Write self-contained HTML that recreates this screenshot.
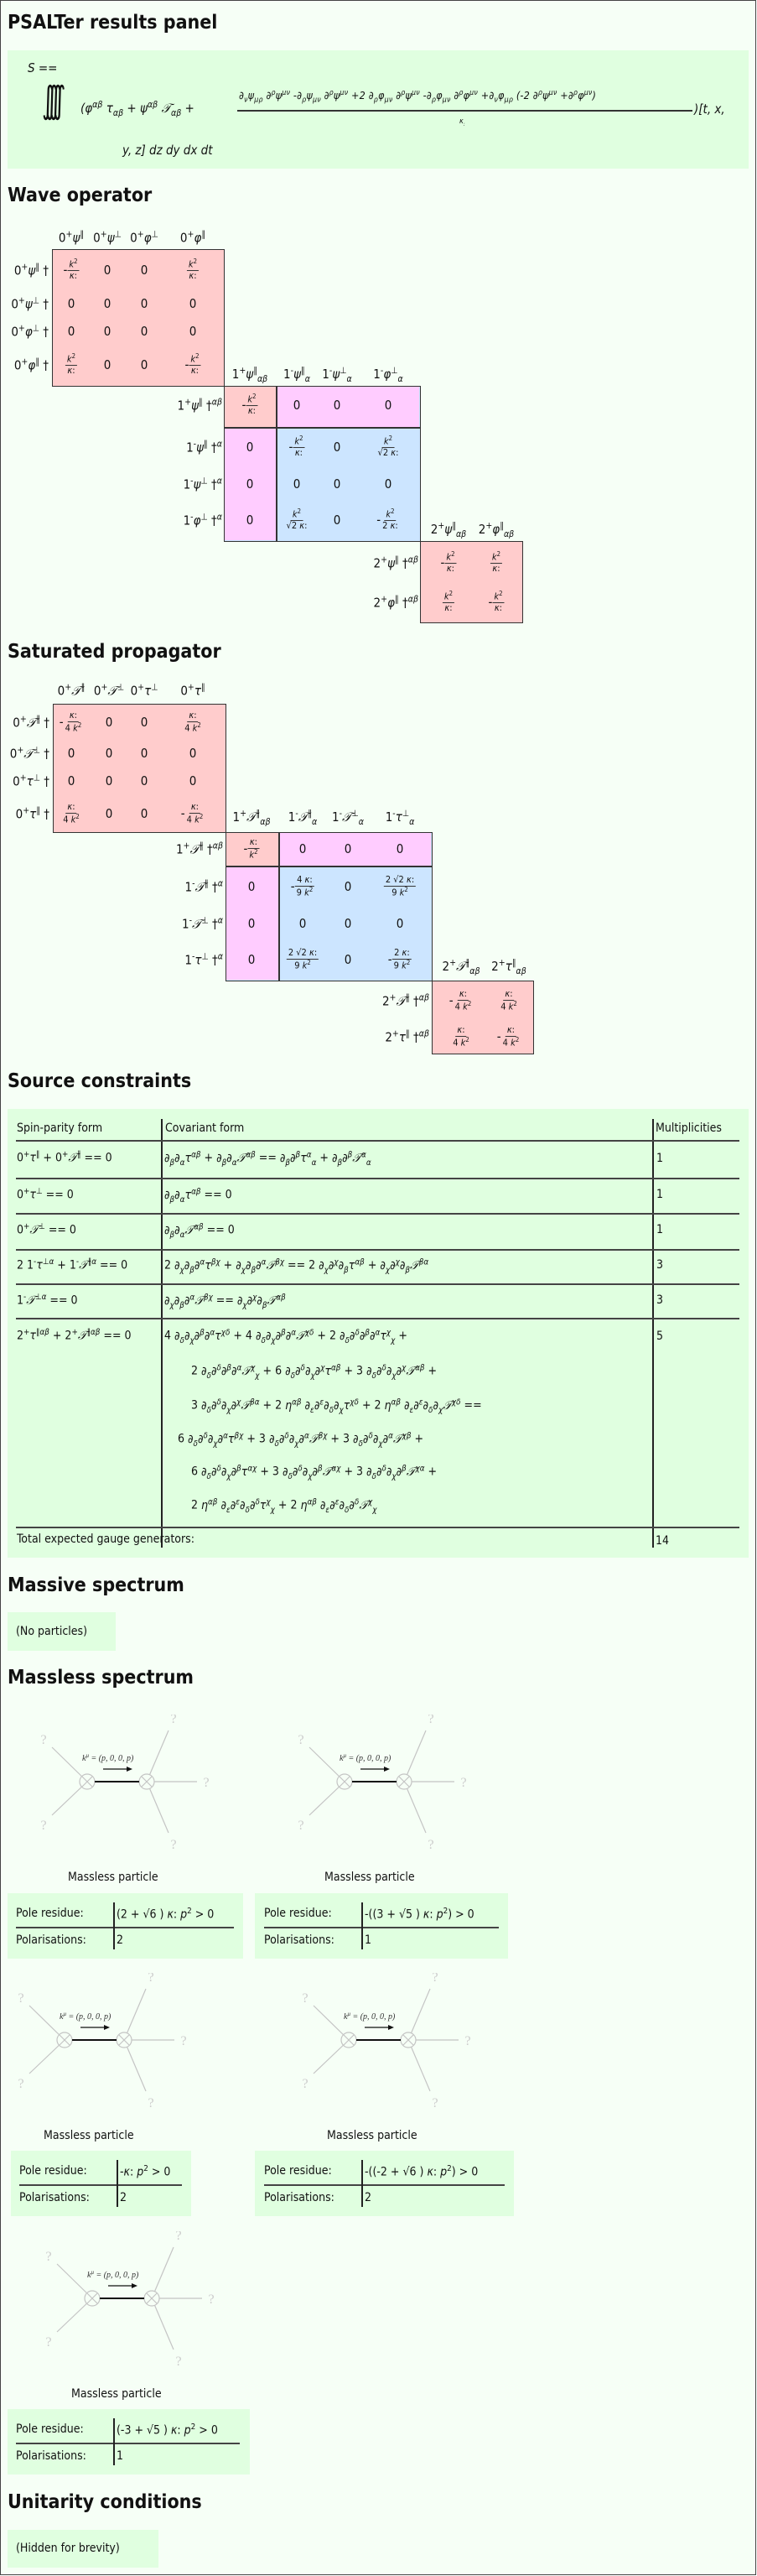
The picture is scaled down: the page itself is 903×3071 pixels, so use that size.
<!DOCTYPE html>
<html><head><meta charset="utf-8"><style>
*{margin:0;padding:0;box-sizing:border-box}
body{width:903px;height:3071px;background:#fff;font-family:"DejaVu Sans Condensed","DejaVu Sans","Liberation Sans",sans-serif;font-size:14px;color:#111;position:relative;overflow:hidden}
#frame{position:absolute;left:0;top:0;width:902px;height:3070px;border:1.5px solid #444;background:#f6fff6}
.a{position:absolute;white-space:nowrap}
h2{position:absolute;left:9px;font-size:23px;font-weight:bold;white-space:nowrap;line-height:1}
.pan{position:absolute;background:#e0ffe0}
.c{position:absolute;transform:translate(-50%,-50%);white-space:nowrap;font-size:15px}
.r{position:absolute;transform:translate(-100%,-50%);white-space:nowrap;font-size:15px}
.h{position:absolute;transform:translate(-50%,-50%);white-space:nowrap;font-size:15px}
.fr{display:inline-flex;flex-direction:column;align-items:center;vertical-align:middle;font-size:11px;line-height:1.15}
.fr .n{border-bottom:1.5px solid #333;padding:0 2px}
.fr .d{padding:0 2px}
i{font-style:italic}
sup,sub{font-size:70%}
.box{position:absolute;border:1.5px solid #333}
.s{background:#ffcccc}.p{background:#ffccff}.b{background:#cce5ff}
.hl{position:absolute;height:2px;background:#444}
.vl{position:absolute;width:1.5px;background:#222}
.m{font-size:14px}
</style></head><body>
<div id="frame"></div>

<h2 style="top:16px">PSALTer results panel</h2>
<div class="pan" style="left:9px;top:60px;width:884px;height:141px"></div>
<div class="a" style="left:33px;top:72px;font-size:15px"><i>S</i> ==</div>
<div class="a" style="left:50px;top:98px;font-size:44px;line-height:1;font-style:italic;letter-spacing:-14px;transform:scaleX(0.7);transform-origin:left">∫∫∫∫</div>
<div class="a" style="left:96px;top:119px;font-size:15px"><i>(φ<sup>αβ</sup> τ<sub>αβ</sub></i> + <i>ψ<sup>αβ</sup> 𝒯<sub>αβ</sub></i> +</div>
<div class="a" style="left:285px;top:106px;font-size:12.5px;font-style:italic;letter-spacing:0.2px">∂<sub>ν</sub>ψ<sub>μρ</sub> ∂<sup>ρ</sup>ψ<sup>μν</sup> -∂<sub>ρ</sub>ψ<sub>μν</sub> ∂<sup>ρ</sup>ψ<sup>μν</sup> +2 ∂<sub>ρ</sub>φ<sub>μν</sub> ∂<sup>ρ</sup>ψ<sup>μν</sup> -∂<sub>ρ</sub>φ<sub>μν</sub> ∂<sup>ρ</sup>φ<sup>μν</sup> +∂<sub>ν</sub>φ<sub>μρ</sub> (-2 ∂<sup>ρ</sup>ψ<sup>μν</sup> +∂<sup>ρ</sup>φ<sup>μν</sup>)</div>
<div class="a" style="left:283px;top:131px;width:543px;height:1.5px;background:#333"></div>
<div class="a" style="left:548px;top:140px;font-size:9px;font-style:italic">κ<sub>:</sub></div>
<div class="a" style="left:828px;top:121px;font-size:15px;font-style:italic">)[t, x,</div>
<div class="a" style="left:146px;top:170px;font-size:15px;font-style:italic">y, z] dz dy dx dt</div>

<h2 style="top:222px">Wave operator</h2>
<!-- block1 -->
<div class="box s" style="left:62px;top:297px;width:206px;height:164px"></div>
<div class="h" style="left:85px;top:283px">0<sup>+</sup><i>ψ</i><sup>∥</sup></div>
<div class="h" style="left:128px;top:283px">0<sup>+</sup><i>ψ</i><sup>⊥</sup></div>
<div class="h" style="left:172px;top:283px">0<sup>+</sup><i>φ</i><sup>⊥</sup></div>
<div class="h" style="left:230px;top:283px">0<sup>+</sup><i>φ</i><sup>∥</sup></div>
<div class="r" style="left:58px;top:322px">0<sup>+</sup><i>ψ</i><sup>∥</sup> †</div>
<div class="r" style="left:58px;top:362px">0<sup>+</sup><i>ψ</i><sup>⊥</sup> †</div>
<div class="r" style="left:58px;top:395px">0<sup>+</sup><i>φ</i><sup>⊥</sup> †</div>
<div class="r" style="left:58px;top:435px">0<sup>+</sup><i>φ</i><sup>∥</sup> †</div>
<div class="c" style="left:85px;top:322px">-<span class="fr"><span class="n"><i>k</i><sup>2</sup></span><span class="d"><i>κ</i>:</span></span></div>
<div class="c" style="left:128px;top:322px">0</div><div class="c" style="left:172px;top:322px">0</div>
<div class="c" style="left:230px;top:322px"><span class="fr"><span class="n"><i>k</i><sup>2</sup></span><span class="d"><i>κ</i>:</span></span></div>
<div class="c" style="left:85px;top:362px">0</div><div class="c" style="left:128px;top:362px">0</div><div class="c" style="left:172px;top:362px">0</div><div class="c" style="left:230px;top:362px">0</div>
<div class="c" style="left:85px;top:395px">0</div><div class="c" style="left:128px;top:395px">0</div><div class="c" style="left:172px;top:395px">0</div><div class="c" style="left:230px;top:395px">0</div>
<div class="c" style="left:85px;top:435px"><span class="fr"><span class="n"><i>k</i><sup>2</sup></span><span class="d"><i>κ</i>:</span></span></div>
<div class="c" style="left:128px;top:435px">0</div><div class="c" style="left:172px;top:435px">0</div>
<div class="c" style="left:230px;top:435px">-<span class="fr"><span class="n"><i>k</i><sup>2</sup></span><span class="d"><i>κ</i>:</span></span></div>

<!-- block2 -->
<div class="box" style="left:267px;top:460px;width:235px;height:186px;background:#cce5ff"></div>
<div class="a s" style="left:268px;top:461px;width:61px;height:48px"></div>
<div class="a p" style="left:330px;top:461px;width:170px;height:48px"></div>
<div class="a p" style="left:268px;top:510px;width:61px;height:134px"></div>
<div class="a" style="left:329px;top:461px;width:1.5px;height:184px;background:#333"></div>
<div class="a" style="left:268px;top:509px;width:233px;height:1.5px;background:#333"></div>
<div class="h" style="left:298px;top:447px">1<sup>+</sup><i>ψ</i><sup>∥</sup><sub><i>αβ</i></sub></div>
<div class="h" style="left:354px;top:447px">1<sup>-</sup><i>ψ</i><sup>∥</sup><sub><i>α</i></sub></div>
<div class="h" style="left:402px;top:447px">1<sup>-</sup><i>ψ</i><sup>⊥</sup><sub><i>α</i></sub></div>
<div class="h" style="left:463px;top:447px">1<sup>-</sup><i>φ</i><sup>⊥</sup><sub><i>α</i></sub></div>
<div class="r" style="left:265px;top:483px">1<sup>+</sup><i>ψ</i><sup>∥</sup> †<sup><i>αβ</i></sup></div>
<div class="r" style="left:265px;top:533px">1<sup>-</sup><i>ψ</i><sup>∥</sup> †<sup><i>α</i></sup></div>
<div class="r" style="left:265px;top:577px">1<sup>-</sup><i>ψ</i><sup>⊥</sup> †<sup><i>α</i></sup></div>
<div class="r" style="left:265px;top:620px">1<sup>-</sup><i>φ</i><sup>⊥</sup> †<sup><i>α</i></sup></div>
<div class="c" style="left:298px;top:483px">-<span class="fr"><span class="n"><i>k</i><sup>2</sup></span><span class="d"><i>κ</i>:</span></span></div>
<div class="c" style="left:354px;top:483px">0</div><div class="c" style="left:402px;top:483px">0</div><div class="c" style="left:463px;top:483px">0</div>
<div class="c" style="left:298px;top:533px">0</div>
<div class="c" style="left:354px;top:533px">-<span class="fr"><span class="n"><i>k</i><sup>2</sup></span><span class="d"><i>κ</i>:</span></span></div>
<div class="c" style="left:402px;top:533px">0</div>
<div class="c" style="left:463px;top:533px"><span class="fr"><span class="n"><i>k</i><sup>2</sup></span><span class="d">√2 <i>κ</i>:</span></span></div>
<div class="c" style="left:298px;top:577px">0</div><div class="c" style="left:354px;top:577px">0</div><div class="c" style="left:402px;top:577px">0</div><div class="c" style="left:463px;top:577px">0</div>
<div class="c" style="left:298px;top:620px">0</div>
<div class="c" style="left:354px;top:620px"><span class="fr"><span class="n"><i>k</i><sup>2</sup></span><span class="d">√2 <i>κ</i>:</span></span></div>
<div class="c" style="left:402px;top:620px">0</div>
<div class="c" style="left:463px;top:620px">-<span class="fr"><span class="n"><i>k</i><sup>2</sup></span><span class="d">2 <i>κ</i>:</span></span></div>

<!-- block3 -->
<div class="box s" style="left:501px;top:645px;width:123px;height:98px"></div>
<div class="h" style="left:535px;top:632px">2<sup>+</sup><i>ψ</i><sup>∥</sup><sub><i>αβ</i></sub></div>
<div class="h" style="left:592px;top:632px">2<sup>+</sup><i>φ</i><sup>∥</sup><sub><i>αβ</i></sub></div>
<div class="r" style="left:499px;top:671px">2<sup>+</sup><i>ψ</i><sup>∥</sup> †<sup><i>αβ</i></sup></div>
<div class="r" style="left:499px;top:718px">2<sup>+</sup><i>φ</i><sup>∥</sup> †<sup><i>αβ</i></sup></div>
<div class="c" style="left:535px;top:671px">-<span class="fr"><span class="n"><i>k</i><sup>2</sup></span><span class="d"><i>κ</i>:</span></span></div>
<div class="c" style="left:592px;top:671px"><span class="fr"><span class="n"><i>k</i><sup>2</sup></span><span class="d"><i>κ</i>:</span></span></div>
<div class="c" style="left:535px;top:718px"><span class="fr"><span class="n"><i>k</i><sup>2</sup></span><span class="d"><i>κ</i>:</span></span></div>
<div class="c" style="left:592px;top:718px">-<span class="fr"><span class="n"><i>k</i><sup>2</sup></span><span class="d"><i>κ</i>:</span></span></div>

<h2 style="top:766px">Saturated propagator</h2>
<!-- block4 -->
<div class="box s" style="left:63px;top:839px;width:207px;height:154px"></div>
<div class="h" style="left:85px;top:823px">0<sup>+</sup><i>𝒯</i><sup>∥</sup></div>
<div class="h" style="left:130px;top:823px">0<sup>+</sup><i>𝒯</i><sup>⊥</sup></div>
<div class="h" style="left:172px;top:823px">0<sup>+</sup><i>τ</i><sup>⊥</sup></div>
<div class="h" style="left:230px;top:823px">0<sup>+</sup><i>τ</i><sup>∥</sup></div>
<div class="r" style="left:59px;top:861px">0<sup>+</sup><i>𝒯</i><sup>∥</sup> †</div>
<div class="r" style="left:59px;top:898px">0<sup>+</sup><i>𝒯</i><sup>⊥</sup> †</div>
<div class="r" style="left:59px;top:931px">0<sup>+</sup><i>τ</i><sup>⊥</sup> †</div>
<div class="r" style="left:59px;top:970px">0<sup>+</sup><i>τ</i><sup>∥</sup> †</div>
<div class="c" style="left:85px;top:861px">-<span class="fr"><span class="n"><i>κ</i>:</span><span class="d">4 <i>k</i><sup>2</sup></span></span></div>
<div class="c" style="left:130px;top:861px">0</div><div class="c" style="left:172px;top:861px">0</div>
<div class="c" style="left:230px;top:861px"><span class="fr"><span class="n"><i>κ</i>:</span><span class="d">4 <i>k</i><sup>2</sup></span></span></div>
<div class="c" style="left:85px;top:898px">0</div><div class="c" style="left:130px;top:898px">0</div><div class="c" style="left:172px;top:898px">0</div><div class="c" style="left:230px;top:898px">0</div>
<div class="c" style="left:85px;top:931px">0</div><div class="c" style="left:130px;top:931px">0</div><div class="c" style="left:172px;top:931px">0</div><div class="c" style="left:230px;top:931px">0</div>
<div class="c" style="left:85px;top:970px"><span class="fr"><span class="n"><i>κ</i>:</span><span class="d">4 <i>k</i><sup>2</sup></span></span></div>
<div class="c" style="left:130px;top:970px">0</div><div class="c" style="left:172px;top:970px">0</div>
<div class="c" style="left:230px;top:970px">-<span class="fr"><span class="n"><i>κ</i>:</span><span class="d">4 <i>k</i><sup>2</sup></span></span></div>

<!-- block5 -->
<div class="box" style="left:269px;top:992px;width:247px;height:178px;background:#cce5ff"></div>
<div class="a s" style="left:270px;top:993px;width:62px;height:39px"></div>
<div class="a p" style="left:333px;top:993px;width:181px;height:39px"></div>
<div class="a p" style="left:270px;top:1033px;width:62px;height:135px"></div>
<div class="a" style="left:332px;top:993px;width:1.5px;height:176px;background:#333"></div>
<div class="a" style="left:270px;top:1032px;width:245px;height:1.5px;background:#333"></div>
<div class="h" style="left:300px;top:975px">1<sup>+</sup><i>𝒯</i><sup>∥</sup><sub><i>αβ</i></sub></div>
<div class="h" style="left:361px;top:975px">1<sup>-</sup><i>𝒯</i><sup>∥</sup><sub><i>α</i></sub></div>
<div class="h" style="left:415px;top:975px">1<sup>-</sup><i>𝒯</i><sup>⊥</sup><sub><i>α</i></sub></div>
<div class="h" style="left:477px;top:975px">1<sup>-</sup><i>τ</i><sup>⊥</sup><sub><i>α</i></sub></div>
<div class="r" style="left:266px;top:1012px">1<sup>+</sup><i>𝒯</i><sup>∥</sup> †<sup><i>αβ</i></sup></div>
<div class="r" style="left:266px;top:1057px">1<sup>-</sup><i>𝒯</i><sup>∥</sup> †<sup><i>α</i></sup></div>
<div class="r" style="left:266px;top:1101px">1<sup>-</sup><i>𝒯</i><sup>⊥</sup> †<sup><i>α</i></sup></div>
<div class="r" style="left:266px;top:1144px">1<sup>-</sup><i>τ</i><sup>⊥</sup> †<sup><i>α</i></sup></div>
<div class="c" style="left:300px;top:1012px">-<span class="fr"><span class="n"><i>κ</i>:</span><span class="d"><i>k</i><sup>2</sup></span></span></div>
<div class="c" style="left:361px;top:1012px">0</div><div class="c" style="left:415px;top:1012px">0</div><div class="c" style="left:477px;top:1012px">0</div>
<div class="c" style="left:300px;top:1057px">0</div>
<div class="c" style="left:361px;top:1057px">-<span class="fr"><span class="n">4 <i>κ</i>:</span><span class="d">9 <i>k</i><sup>2</sup></span></span></div>
<div class="c" style="left:415px;top:1057px">0</div>
<div class="c" style="left:477px;top:1057px"><span class="fr"><span class="n">2 √2 <i>κ</i>:</span><span class="d">9 <i>k</i><sup>2</sup></span></span></div>
<div class="c" style="left:300px;top:1101px">0</div><div class="c" style="left:361px;top:1101px">0</div><div class="c" style="left:415px;top:1101px">0</div><div class="c" style="left:477px;top:1101px">0</div>
<div class="c" style="left:300px;top:1144px">0</div>
<div class="c" style="left:361px;top:1144px"><span class="fr"><span class="n">2 √2 <i>κ</i>:</span><span class="d">9 <i>k</i><sup>2</sup></span></span></div>
<div class="c" style="left:415px;top:1144px">0</div>
<div class="c" style="left:477px;top:1144px">-<span class="fr"><span class="n">2 <i>κ</i>:</span><span class="d">9 <i>k</i><sup>2</sup></span></span></div>

<!-- block6 -->
<div class="box s" style="left:515px;top:1169px;width:122px;height:88px"></div>
<div class="h" style="left:550px;top:1153px">2<sup>+</sup><i>𝒯</i><sup>∥</sup><sub><i>αβ</i></sub></div>
<div class="h" style="left:607px;top:1153px">2<sup>+</sup><i>τ</i><sup>∥</sup><sub><i>αβ</i></sub></div>
<div class="r" style="left:512px;top:1193px">2<sup>+</sup><i>𝒯</i><sup>∥</sup> †<sup><i>αβ</i></sup></div>
<div class="r" style="left:512px;top:1236px">2<sup>+</sup><i>τ</i><sup>∥</sup> †<sup><i>αβ</i></sup></div>
<div class="c" style="left:550px;top:1193px">-<span class="fr"><span class="n"><i>κ</i>:</span><span class="d">4 <i>k</i><sup>2</sup></span></span></div>
<div class="c" style="left:607px;top:1193px"><span class="fr"><span class="n"><i>κ</i>:</span><span class="d">4 <i>k</i><sup>2</sup></span></span></div>
<div class="c" style="left:550px;top:1236px"><span class="fr"><span class="n"><i>κ</i>:</span><span class="d">4 <i>k</i><sup>2</sup></span></span></div>
<div class="c" style="left:607px;top:1236px">-<span class="fr"><span class="n"><i>κ</i>:</span><span class="d">4 <i>k</i><sup>2</sup></span></span></div>

<h2 style="top:1278px">Source constraints</h2>
<div class="pan" style="left:9px;top:1322px;width:884px;height:535px"></div>
<div class="vl" style="left:192px;top:1334px;height:511px"></div>
<div class="vl" style="left:778px;top:1334px;height:511px"></div>
<div class="hl" style="left:19px;top:1359px;width:863px"></div>
<div class="hl" style="left:19px;top:1404px;width:863px"></div>
<div class="hl" style="left:19px;top:1446px;width:863px"></div>
<div class="hl" style="left:19px;top:1489px;width:863px"></div>
<div class="hl" style="left:19px;top:1530px;width:863px"></div>
<div class="hl" style="left:19px;top:1571px;width:863px"></div>
<div class="hl" style="left:19px;top:1820px;width:863px"></div>
<div class="a m" style="left:20px;top:1337px">Spin-parity form</div>
<div class="a m" style="left:197px;top:1337px">Covariant form</div>
<div class="a m" style="left:782px;top:1337px">Multiplicities</div>

<div class="a m" style="left:20px;top:1371px">0<sup>+</sup><i>τ</i><sup>∥</sup> + 0<sup>+</sup><i>𝒯</i><sup>∥</sup> == 0</div>
<div class="a m" style="left:196px;top:1371px"><i>∂<sub>β</sub>∂<sub>α</sub>τ<sup>αβ</sup></i> + <i>∂<sub>β</sub>∂<sub>α</sub>𝒯<sup>αβ</sup></i> == <i>∂<sub>β</sub>∂<sup>β</sup>τ<sup>α</sup><sub>α</sub></i> + <i>∂<sub>β</sub>∂<sup>β</sup>𝒯<sup>α</sup><sub>α</sub></i></div>
<div class="a m" style="left:783px;top:1373px">1</div>
<div class="a m" style="left:20px;top:1415px">0<sup>+</sup><i>τ</i><sup>⊥</sup> == 0</div>
<div class="a m" style="left:196px;top:1415px"><i>∂<sub>β</sub>∂<sub>α</sub>τ<sup>αβ</sup></i> == 0</div>
<div class="a m" style="left:783px;top:1416px">1</div>
<div class="a m" style="left:20px;top:1457px">0<sup>+</sup><i>𝒯</i><sup>⊥</sup> == 0</div>
<div class="a m" style="left:196px;top:1457px"><i>∂<sub>β</sub>∂<sub>α</sub>𝒯<sup>αβ</sup></i> == 0</div>
<div class="a m" style="left:783px;top:1458px">1</div>
<div class="a m" style="left:20px;top:1499px">2 1<sup>-</sup><i>τ</i><sup>⊥<i>α</i></sup> + 1<sup>-</sup><i>𝒯</i><sup>∥<i>α</i></sup> == 0</div>
<div class="a m" style="left:196px;top:1499px">2 <i>∂<sub>χ</sub>∂<sub>β</sub>∂<sup>α</sup>τ<sup>βχ</sup></i> + <i>∂<sub>χ</sub>∂<sub>β</sub>∂<sup>α</sup>𝒯<sup>βχ</sup></i> == 2 <i>∂<sub>χ</sub>∂<sup>χ</sup>∂<sub>β</sub>τ<sup>αβ</sup></i> + <i>∂<sub>χ</sub>∂<sup>χ</sup>∂<sub>β</sub>𝒯<sup>βα</sup></i></div>
<div class="a m" style="left:783px;top:1500px">3</div>
<div class="a m" style="left:20px;top:1541px">1<sup>-</sup><i>𝒯</i><sup>⊥<i>α</i></sup> == 0</div>
<div class="a m" style="left:196px;top:1541px"><i>∂<sub>χ</sub>∂<sub>β</sub>∂<sup>α</sup>𝒯<sup>βχ</sup></i> == <i>∂<sub>χ</sub>∂<sup>χ</sup>∂<sub>β</sub>𝒯<sup>αβ</sup></i></div>
<div class="a m" style="left:783px;top:1542px">3</div>
<div class="a m" style="left:20px;top:1583px">2<sup>+</sup><i>τ</i><sup>∥<i>αβ</i></sup> + 2<sup>+</sup><i>𝒯</i><sup>∥<i>αβ</i></sup> == 0</div>
<div class="a m" style="left:783px;top:1585px">5</div>
<div class="a m" style="left:196px;top:1583px">4 <i>∂<sub>δ</sub>∂<sub>χ</sub>∂<sup>β</sup>∂<sup>α</sup>τ<sup>χδ</sup></i> + 4 <i>∂<sub>δ</sub>∂<sub>χ</sub>∂<sup>β</sup>∂<sup>α</sup>𝒯<sup>χδ</sup></i> + 2 <i>∂<sub>δ</sub>∂<sup>δ</sup>∂<sup>β</sup>∂<sup>α</sup>τ<sup>χ</sup><sub>χ</sub></i> +</div>
<div class="a m" style="left:228px;top:1625px">2 <i>∂<sub>δ</sub>∂<sup>δ</sup>∂<sup>β</sup>∂<sup>α</sup>𝒯<sup>χ</sup><sub>χ</sub></i> + 6 <i>∂<sub>δ</sub>∂<sup>δ</sup>∂<sub>χ</sub>∂<sup>χ</sup>τ<sup>αβ</sup></i> + 3 <i>∂<sub>δ</sub>∂<sup>δ</sup>∂<sub>χ</sub>∂<sup>χ</sup>𝒯<sup>αβ</sup></i> +</div>
<div class="a m" style="left:228px;top:1666px">3 <i>∂<sub>δ</sub>∂<sup>δ</sup>∂<sub>χ</sub>∂<sup>χ</sup>𝒯<sup>βα</sup></i> + 2 <i>η<sup>αβ</sup> ∂<sub>ε</sub>∂<sup>ε</sup>∂<sub>δ</sub>∂<sub>χ</sub>τ<sup>χδ</sup></i> + 2 <i>η<sup>αβ</sup> ∂<sub>ε</sub>∂<sup>ε</sup>∂<sub>δ</sub>∂<sub>χ</sub>𝒯<sup>χδ</sup></i> ==</div>
<div class="a m" style="left:212px;top:1706px">6 <i>∂<sub>δ</sub>∂<sup>δ</sup>∂<sub>χ</sub>∂<sup>α</sup>τ<sup>βχ</sup></i> + 3 <i>∂<sub>δ</sub>∂<sup>δ</sup>∂<sub>χ</sub>∂<sup>α</sup>𝒯<sup>βχ</sup></i> + 3 <i>∂<sub>δ</sub>∂<sup>δ</sup>∂<sub>χ</sub>∂<sup>α</sup>𝒯<sup>χβ</sup></i> +</div>
<div class="a m" style="left:228px;top:1745px">6 <i>∂<sub>δ</sub>∂<sup>δ</sup>∂<sub>χ</sub>∂<sup>β</sup>τ<sup>αχ</sup></i> + 3 <i>∂<sub>δ</sub>∂<sup>δ</sup>∂<sub>χ</sub>∂<sup>β</sup>𝒯<sup>αχ</sup></i> + 3 <i>∂<sub>δ</sub>∂<sup>δ</sup>∂<sub>χ</sub>∂<sup>β</sup>𝒯<sup>χα</sup></i> +</div>
<div class="a m" style="left:228px;top:1785px">2 <i>η<sup>αβ</sup> ∂<sub>ε</sub>∂<sup>ε</sup>∂<sub>δ</sub>∂<sup>δ</sup>τ<sup>χ</sup><sub>χ</sub></i> + 2 <i>η<sup>αβ</sup> ∂<sub>ε</sub>∂<sup>ε</sup>∂<sub>δ</sub>∂<sup>δ</sup>𝒯<sup>χ</sup><sub>χ</sub></i></div>
<div class="a m" style="left:20px;top:1827px">Total expected gauge generators:</div>
<div class="a m" style="left:782px;top:1829px">14</div>

<h2 style="top:1879px">Massive spectrum</h2>
<div class="pan" style="left:9px;top:1922px;width:129px;height:46px"></div>
<div class="a m" style="left:19px;top:1937px">(No particles)</div>

<h2 style="top:1989px">Massless spectrum</h2>

<svg width="0" height="0" style="position:absolute"><defs>
<g id="dg">
<g stroke="#c4c4c4" stroke-width="1.2" fill="none">
<line x1="60" y1="80" x2="18" y2="39"/><line x1="60" y1="80" x2="18" y2="120"/>
<line x1="131" y1="80" x2="157" y2="19"/><line x1="131" y1="80" x2="157" y2="141"/>
<line x1="131" y1="80" x2="191" y2="80"/>
<circle cx="60" cy="80" r="9" fill="#f6fff6"/><circle cx="131" cy="80" r="9" fill="#f6fff6"/>
<line x1="54" y1="74" x2="66" y2="86"/><line x1="54" y1="86" x2="66" y2="74"/>
<line x1="125" y1="74" x2="137" y2="86"/><line x1="125" y1="86" x2="137" y2="74"/>
</g>
<line x1="69" y1="80" x2="122" y2="80" stroke="#111" stroke-width="2"/>
<line x1="79" y1="65" x2="110" y2="65" stroke="#111" stroke-width="1.2"/>
<polygon points="114,65 107,62 107,68" fill="#111"/>
<text x="54" y="55" font-family="Liberation Serif,serif" font-size="10" font-style="italic" fill="#333">k<tspan font-size="7" dy="-4">μ</tspan><tspan dy="4"> = (p, 0, 0, p)</tspan></text>
<g font-family="Liberation Serif,serif" font-size="16" fill="#ccc" text-anchor="middle">
<text x="8" y="35">?</text><text x="8" y="137">?</text><text x="163" y="10">?</text><text x="163" y="160">?</text><text x="202" y="86">?</text>
</g>
</g></defs></svg>

<svg class="a" style="left:44px;top:2044px" width="220" height="170"><use href="#dg"/></svg>
<svg class="a" style="left:351px;top:2044px" width="220" height="170"><use href="#dg"/></svg>
<svg class="a" style="left:17px;top:2352px" width="220" height="170"><use href="#dg"/></svg>
<svg class="a" style="left:356px;top:2352px" width="220" height="170"><use href="#dg"/></svg>
<svg class="a" style="left:50px;top:2660px" width="220" height="170"><use href="#dg"/></svg>

<div class="a m" style="left:81px;top:2230px">Massless particle</div>
<div class="a m" style="left:387px;top:2230px">Massless particle</div>
<div class="a m" style="left:52px;top:2538px">Massless particle</div>
<div class="a m" style="left:390px;top:2538px">Massless particle</div>
<div class="a m" style="left:85px;top:2846px">Massless particle</div>

<div class="pan" style="left:9px;top:2257px;width:281px;height:78px"></div>
<div class="hl" style="left:19px;top:2297px;width:260px"></div>
<div class="vl" style="left:135px;top:2268px;height:56px"></div>
<div class="a m" style="left:19px;top:2273px">Pole residue:</div>
<div class="a m" style="left:139px;top:2273px">(2 + √6 ) <i>κ</i>: <i>p</i><sup>2</sup> &gt; 0</div>
<div class="a m" style="left:19px;top:2305px">Polarisations:</div>
<div class="a m" style="left:139px;top:2305px">2</div>

<div class="pan" style="left:304px;top:2257px;width:302px;height:78px"></div>
<div class="hl" style="left:315px;top:2297px;width:280px"></div>
<div class="vl" style="left:431px;top:2268px;height:56px"></div>
<div class="a m" style="left:315px;top:2273px">Pole residue:</div>
<div class="a m" style="left:435px;top:2273px">-((3 + √5 ) <i>κ</i>: <i>p</i><sup>2</sup>) &gt; 0</div>
<div class="a m" style="left:315px;top:2305px">Polarisations:</div>
<div class="a m" style="left:435px;top:2305px">1</div>

<div class="pan" style="left:13px;top:2564px;width:215px;height:78px"></div>
<div class="hl" style="left:23px;top:2604px;width:194px"></div>
<div class="vl" style="left:139px;top:2575px;height:56px"></div>
<div class="a m" style="left:23px;top:2580px">Pole residue:</div>
<div class="a m" style="left:143px;top:2580px">-<i>κ</i>: <i>p</i><sup>2</sup> &gt; 0</div>
<div class="a m" style="left:23px;top:2612px">Polarisations:</div>
<div class="a m" style="left:143px;top:2612px">2</div>

<div class="pan" style="left:304px;top:2564px;width:309px;height:78px"></div>
<div class="hl" style="left:315px;top:2604px;width:287px"></div>
<div class="vl" style="left:431px;top:2575px;height:56px"></div>
<div class="a m" style="left:315px;top:2580px">Pole residue:</div>
<div class="a m" style="left:435px;top:2580px">-((-2 + √6 ) <i>κ</i>: <i>p</i><sup>2</sup>) &gt; 0</div>
<div class="a m" style="left:315px;top:2612px">Polarisations:</div>
<div class="a m" style="left:435px;top:2612px">2</div>

<div class="pan" style="left:9px;top:2872px;width:289px;height:78px"></div>
<div class="hl" style="left:19px;top:2912px;width:267px"></div>
<div class="vl" style="left:135px;top:2883px;height:56px"></div>
<div class="a m" style="left:19px;top:2888px">Pole residue:</div>
<div class="a m" style="left:139px;top:2888px">(-3 + √5 ) <i>κ</i>: <i>p</i><sup>2</sup> &gt; 0</div>
<div class="a m" style="left:19px;top:2920px">Polarisations:</div>
<div class="a m" style="left:139px;top:2920px">1</div>

<h2 style="top:2972px">Unitarity conditions</h2>
<div class="pan" style="left:9px;top:3016px;width:180px;height:45px"></div>
<div class="a m" style="left:19px;top:3030px">(Hidden for brevity)</div>
</body></html>
